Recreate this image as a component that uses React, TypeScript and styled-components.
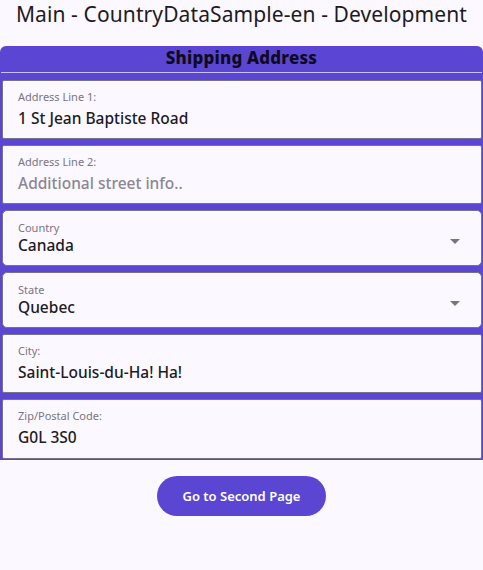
import styled, { createGlobalStyle } from 'styled-components';

const GlobalStyle = createGlobalStyle`
  html, body {
    margin: 0;
    padding: 0;
    background: #fcf8ff;
  }
  body {
    font-family: 'Open Sans', 'Noto Sans', sans-serif;
  }
`;

const Page = styled.div`
  width: 483px;
  min-height: 570px;
  background: #fcf8ff;
  display: flex;
  flex-direction: column;
`;

const Title = styled.h1`
  margin: 0;
  height: 46px;
  padding-top: 1px;
  box-sizing: border-box;
  text-align: center;
  font-family: 'Noto Sans', sans-serif;
  font-weight: 400;
  font-size: 21px;
  line-height: 26px;
  letter-spacing: 0.1px;
  color: #1c1b1f;
`;

const Panel = styled.section`
  background: #5a46d2;
  border-radius: 6px 6px 0 0;
  padding: 0 1px 1px 1px;
  display: flex;
  flex-direction: column;
`;

const Header = styled.div`
  height: 27px;
  border-bottom: 1px solid #c9c2f2;
  box-sizing: border-box;
  padding-bottom: 3px;
  display: flex;
  align-items: center;
  justify-content: center;
  font-family: 'Noto Sans', sans-serif;
  font-weight: 800;
  font-size: 17px;
  letter-spacing: 0.2px;
  color: #0d0b1c;
  margin-bottom: 7px;
`;

const Fields = styled.div`
  display: flex;
  flex-direction: column;
  gap: 6px;
  padding-left: 1px;
`;

const Field = styled.div<{ $h: number; $round?: boolean }>`
  height: ${(p) => p.$h}px;
  box-sizing: border-box;
  background: #fcf8ff;
  border: 1px solid #77728c;
  border-radius: ${(p) => (p.$round ? '5px' : '2px')};
  padding: ${(p) => (p.$round ? '10px 15px 0 15px' : '9px 15px 0 15px')};
  display: flex;
  align-items: flex-start;
  justify-content: space-between;
`;

const FieldText = styled.div<{ $tight?: boolean }>`
  display: flex;
  flex-direction: column;
  gap: ${(p) => (p.$tight ? '0' : '4px')};
`;

const Label = styled.span`
  font-family: 'Noto Sans', sans-serif;
  font-size: 11px;
  line-height: 14px;
  color: #7a7584;
`;

const Value = styled.span<{ $placeholder?: boolean }>`
  font-family: 'Noto Sans', sans-serif;
  font-size: 15.5px;
  line-height: 20px;
  font-weight: 500;
  color: ${(p) => (p.$placeholder ? '#8b8695' : '#1c1b1f')};
`;

const Arrow = styled.span`
  margin-top: 18px;
  margin-right: 6px;
  width: 0;
  height: 0;
  border-left: 5px solid transparent;
  border-right: 5px solid transparent;
  border-top: 5px solid #7a7584;
`;

const ButtonRow = styled.div`
  display: flex;
  justify-content: center;
  padding-top: 16px;
`;

const Button = styled.button`
  width: 169px;
  height: 40px;
  border: none;
  border-radius: 20px;
  background: #5a46d2;
  color: #ffffff;
  font-family: 'Noto Sans', sans-serif;
  font-weight: 600;
  font-size: 13px;
  cursor: pointer;
`;

type FieldDef = { label: string; value: string; h: number; placeholder?: boolean; select?: boolean };

const fields: FieldDef[] = [
  { label: 'Address Line 1:', value: '1 St Jean Baptiste Road', h: 59 },
  { label: 'Address Line 2:', value: 'Additional street info..', h: 59, placeholder: true },
  { label: 'Country', value: 'Canada', h: 56, select: true },
  { label: 'State', value: 'Quebec', h: 56, select: true },
  { label: 'City:', value: 'Saint-Louis-du-Ha! Ha!', h: 59 },
  { label: 'Zip/Postal Code:', value: 'G0L 3S0', h: 60 },
];

export default function App() {
  return (
    <Page>
      <GlobalStyle />
      <Title>Main - CountryDataSample-en - Development</Title>
      <Panel>
        <Header>Shipping Address</Header>
        <Fields>
          {fields.map((f) => (
            <Field key={f.label} $h={f.h} $round={f.select}>
              <FieldText $tight={f.select}>
                <Label>{f.label}</Label>
                <Value $placeholder={f.placeholder}>{f.value}</Value>
              </FieldText>
              {f.select && <Arrow />}
            </Field>
          ))}
        </Fields>
      </Panel>
      <ButtonRow>
        <Button>Go to Second Page</Button>
      </ButtonRow>
    </Page>
  );
}
